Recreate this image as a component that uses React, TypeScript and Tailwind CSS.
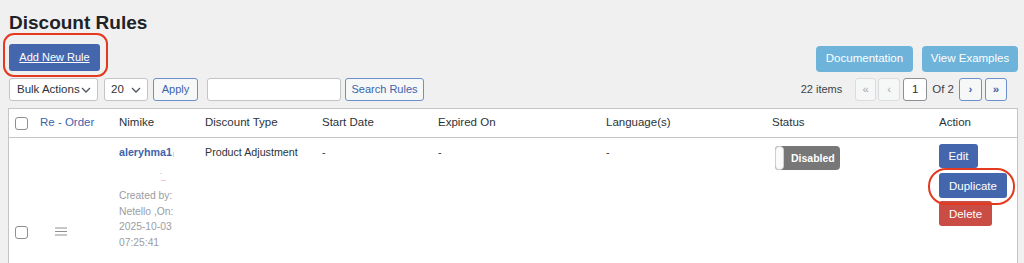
import React from "react";

const font = { fontFamily: '"Liberation Sans", Arial, sans-serif' };

function Chevron() {
  return (
    <svg width="10" height="6" viewBox="0 0 10 6" className="ml-auto">
      <path d="M1 1l4 4 4-4" fill="none" stroke="#50575e" strokeWidth="1.3" />
    </svg>
  );
}

export default function App() {
  return (
    <div className="w-[1024px] h-[263px] overflow-hidden bg-[#f0f0f1] text-[#2c3338] pl-2 pr-[6px]" style={font}>
      <div className="pt-[11px] pl-px h-[36px] text-[19px] leading-[24px] font-bold text-[#1d2327]">Discount Rules</div>
      <div className="mt-2 flex items-start h-[28px]">
        <div className="relative ml-px">
          <div className="absolute left-[-6px] top-[-11px] w-[105px] h-[44px] border-2 border-[#e4391f] rounded-[11px]" />
          <button className="w-[91px] h-[27px] bg-[#4466ad] rounded-[3px] text-white text-[11px] underline">Add New Rule</button>
        </div>
        <div className="ml-auto mt-[2px] flex gap-[9px]">
          <button className="w-[97px] h-[26px] bg-[#6db3da] rounded-[4px] text-white text-[11.5px]">Documentation</button>
          <button className="w-[96px] h-[26px] bg-[#6db3da] rounded-[4px] text-white text-[11.5px]">View Examples</button>
        </div>
      </div>
      <div className="mt-[6px] flex items-center h-[23px] text-[11.5px]">
        <div className="ml-px w-[89px] h-[23px] bg-white border border-[#c3c4c7] rounded-[3px] flex items-center pl-[7px] pr-[6px]">
          Bulk Actions <Chevron />
        </div>
        <div className="ml-[6px] w-[44px] h-[23px] bg-white border border-[#c3c4c7] rounded-[3px] flex items-center pl-[6px] pr-[6px]">
          20 <Chevron />
        </div>
        <button className="ml-[5px] w-[45px] h-[23px] bg-[#f6f7f7] border border-[#6e8fce] rounded-[3px] text-[#3c64ad] text-[11px]">Apply</button>
        <div className="ml-[9px] w-[134px] h-[23px] bg-white border border-[#c3c4c7] rounded-[3px]" />
        <button className="ml-[4px] w-[79px] h-[23px] bg-[#f6f7f7] border border-[#6e8fce] rounded-[3px] text-[#3c64ad] text-[11px]">Search Rules</button>
        <div className="ml-auto flex items-center">
          <span className="text-[#3c434a] mr-[13px] text-[11px]">22 items</span>
          <div className="w-[21px] h-[23px] bg-[#f6f7f7] border border-[#dcdcde] rounded-[3px] text-[#a7aaad] flex items-center justify-center">«</div>
          <div className="ml-[2px] w-[22px] h-[23px] bg-[#f6f7f7] border border-[#dcdcde] rounded-[3px] text-[#a7aaad] flex items-center justify-center">‹</div>
          <div className="ml-[3px] w-[24px] h-[23px] bg-white border border-[#8c8f94] rounded-[3px] flex items-center justify-center">1</div>
          <span className="ml-[5px] text-[#3c434a]">Of 2</span>
          <div className="ml-[5px] w-[23px] h-[23px] bg-[#f6f7f7] border border-[#6e8fce] rounded-[3px] text-[#3c64ad] font-bold flex items-center justify-center">›</div>
          <div className="ml-[3px] w-[22px] h-[23px] bg-[#f6f7f7] border border-[#6e8fce] rounded-[3px] text-[#3c64ad] font-bold flex items-center justify-center">»</div>
          <div className="w-[11px]" />
        </div>
      </div>
      <div className="mt-[7px] w-[1010px] h-[200px] bg-white border border-[#c3c4c7] text-[11.5px]">
        <div className="grid grid-cols-[31px_79px_86px_117px_116px_168px_166px_167px_1fr] h-[29px] items-center border-b border-[#c3c4c7]">
          <div className="pl-[6px]"><div className="w-[13px] h-[13px] border border-[#8c8f94] rounded-[3px] bg-white" /></div>
          <div className="text-[#3c64ad]">Re - Order</div>
          <div>Nimike</div>
          <div>Discount Type</div>
          <div>Start Date</div>
          <div>Expired On</div>
          <div>Language(s)</div>
          <div>Status</div>
          <div>Action</div>
        </div>
        <div className="grid grid-cols-[31px_79px_86px_117px_116px_168px_166px_167px_1fr] items-start leading-[16px] text-[10.7px]">
          <div className="pl-[6px] pt-[88px]"><div className="w-[13px] h-[13px] border border-[#8c8f94] rounded-[3px] bg-white" /></div>
          <div className="pt-[89px] pl-[15px]">
            <svg width="12" height="9" viewBox="0 0 12 9">
              <path d="M0 1h12M0 4.5h12M0 8h12" stroke="#8c8f94" strokeWidth="1.2" />
            </svg>
          </div>
          <div className="pt-[6px]">
            <div className="flex items-end">
              <span className="font-bold text-[#3c64ad]">aleryhma1</span>
              <span className="ml-px mb-[3px] w-px h-[5px] bg-[#d5d8e0]" />
            </div>
            <div className="mt-[13px] ml-[41px] w-[2px] h-px bg-[#dcdcde]" />
            <div className="mt-[6px] ml-[42px] w-[5px] h-px bg-[#f0c8c8]" />
            <div className="mt-[7px] text-[#9a9da2] leading-[15.5px] text-[10.3px]">
              <div>Created by:</div>
              <div>Netello ,On:</div>
              <div>2025-10-03</div>
              <div>07:25:41</div>
            </div>
          </div>
          <div className="pt-[6px]">Product Adjustment</div>
          <div className="pt-[6px]">-</div>
          <div className="pt-[6px]">-</div>
          <div className="pt-[6px]">-</div>
          <div className="pt-[8px] pl-[3px]">
            <div className="w-[65px] h-[24px] bg-[#777777] rounded-[4px] flex items-center relative">
              <div className="absolute left-0 top-0 w-[9px] h-[24px] bg-[#fafafa] border border-[#cfcfcf] rounded-[4px]" />
              <span className="ml-[16px] text-white font-bold text-[10.5px]">Disabled</span>
            </div>
          </div>
          <div className="pt-[6px] flex flex-col items-start text-[11.5px]">
            <button className="w-[39px] h-[24px] bg-[#4466ad] rounded-[3px] text-white">Edit</button>
            <div className="relative mt-[5px]">
              <div className="absolute left-[-11px] top-[-5px] w-[87px] h-[37px] border-2 border-[#e4391f] rounded-[18px]" />
              <button className="relative w-[68px] h-[25px] bg-[#4466ad] rounded-[3px] text-white">Duplicate</button>
            </div>
            <button className="mt-[3px] w-[53px] h-[25px] bg-[#c94c45] rounded-[3px] text-white">Delete</button>
          </div>
        </div>
      </div>
    </div>
  );
}
